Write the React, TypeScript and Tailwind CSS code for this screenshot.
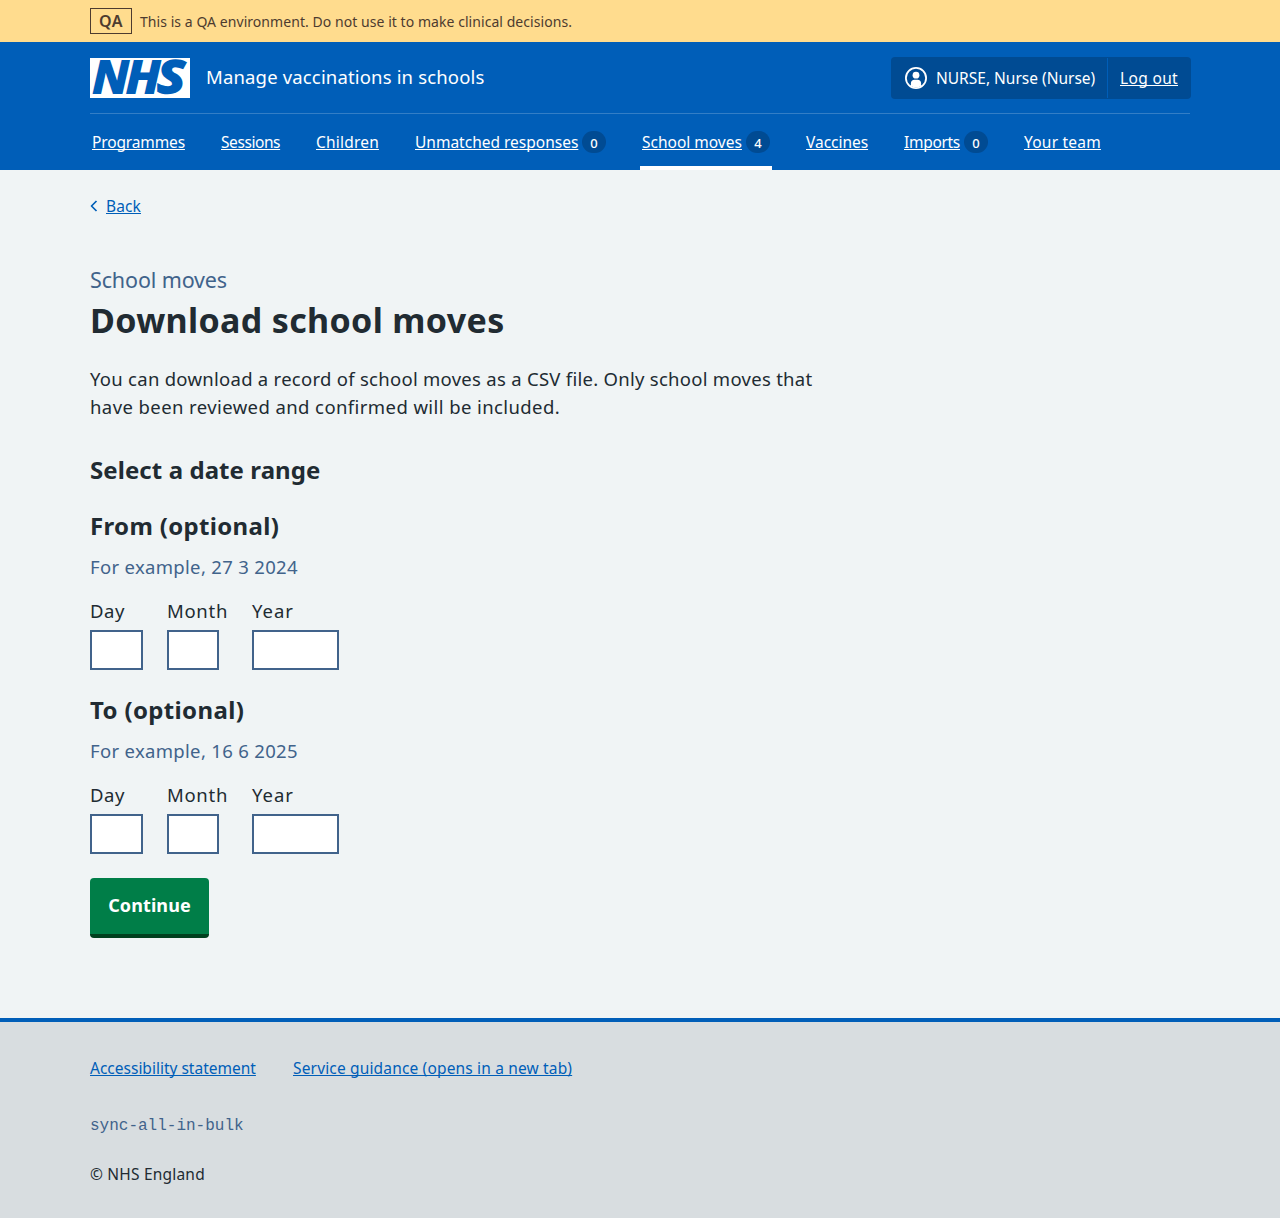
import type { ReactNode } from "react";

const link = "underline decoration-1 underline-offset-[1px] [text-decoration-skip-ink:none]";

function Logo() {
  return (
    <svg viewBox="0 0 100 40" className="h-10 w-[100px] shrink-0" role="img" aria-label="NHS">
      <rect width="100" height="40" fill="#fff" />
      <g fill="#005eb8" stroke="#005eb8" strokeWidth="1.8" fontFamily="'Open Sans', sans-serif" fontWeight="700" fontStyle="italic" fontSize="44">
        <text x="2.500" y="35.300" textLength="36" lengthAdjust="spacingAndGlyphs">N</text>
        <text x="36" y="35.300" textLength="34" lengthAdjust="spacingAndGlyphs">H</text>
        <text x="67.500" y="35.300" textLength="27" lengthAdjust="spacingAndGlyphs" strokeWidth="2.400">S</text>
      </g>
    </svg>
  );
}

function NavItem({ label, tracking, width, count, current }: { label: string; tracking: string; width: string; count?: number; current?: boolean }) {
  return (
    <li className={`flex h-14 items-center gap-1 border-b-4 px-0.5 pt-1 ${current ? "border-white" : "border-transparent"}`}>
      <a href="#" className={`${link} ${tracking} ${width}`}>{label}</a>
      {count !== undefined && (
        <span className="flex h-[22px] w-6 items-center justify-center rounded-full bg-[#004b93] pt-0.5 text-[13px] font-medium leading-none">{count}</span>
      )}
    </li>
  );
}

function Field({ label, tracking, col, input }: { label: string; tracking: string; col: string; input: string }) {
  return (
    <label className={`flex flex-col ${col}`}>
      <span className={`mb-[5px] h-7 text-[18.5px] leading-7 ${tracking}`}>{label}</span>
      <input className={`h-10 border-2 border-[#41638b] bg-white ${input}`} />
    </label>
  );
}

function DateGroup({ title, tracking, hint }: { title: ReactNode; tracking: string; hint: string }) {
  return (
    <fieldset className="mb-6 h-[160px]">
      <h2 className={`h-8 text-2xl font-bold leading-8 ${tracking}`}>{title}</h2>
      <div className="mt-[11px] h-7 text-[18.5px] leading-7 tracking-[0.32px] text-[#41638b]">{hint}</div>
      <div className="mt-4 flex">
        <Field label="Day" tracking="tracking-[0.55px]" col="w-[77px]" input="w-[53px]" />
        <Field label="Month" tracking="tracking-[0.7px]" col="w-[85px]" input="w-[52px]" />
        <Field label="Year" tracking="tracking-[0.95px]" col="w-[87px]" input="w-[87px]" />
      </div>
    </fieldset>
  );
}

export default function App() {
  return (
    <div className="flex min-h-[1218px] flex-col whitespace-nowrap bg-[#f0f4f5] font-['Noto_Sans',sans-serif] text-[15.5px] leading-6 text-[#212b32]">
      <div className="h-[42px] bg-[#ffdc8e] text-[#4d3b2f]">
        <div className="mx-auto flex h-full w-[1100px] items-center gap-2">
          <strong className="flex h-[26px] w-[42px] items-center justify-center border border-[#4d3b2f] text-base font-semibold tracking-[0.4px]">QA</strong>
          <span className="pt-0.5 text-sm tracking-[0.055px]">This is a QA environment. Do not use it to make clinical decisions.</span>
        </div>
      </div>

      <header className="h-32 bg-[#005eb8] text-white">
        <div className="mx-auto w-[1100px]">
          <div className="flex h-[72px] items-center border-b border-[#337ec6]">
            <Logo />
            <span className="ml-4 pb-px text-[18.5px] tracking-[0.16px]">Manage vaccinations in schools</span>
            <div className="-mr-px ml-auto flex h-[42px] w-[300px] rounded bg-[#004b93] py-px">
              <div className="flex w-[217px] items-center border-r border-[#005eb8] pl-[14px]">
                <svg viewBox="0 0 22 22" className="mr-[9px] h-[22px] w-[22px]">
                  <circle cx="11" cy="11" r="10.1" fill="none" stroke="#fff" strokeWidth="1.8" />
                  <circle cx="11" cy="8.2" r="3.4" fill="#fff" />
                  <path d="M5.900 19v-2.700c0-2.300 1.500-3.600 3.500-3.600h3.200c2 0 3.500 1.300 3.500 3.600V19a10 10 0 0 1-10.200 0z" fill="#fff" />
                </svg>
                <span>NURSE, Nurse (Nurse)</span>
              </div>
              <div className="flex items-center pl-3">
                <a href="#" className={`${link} tracking-[0.34px]`}>Log out</a>
              </div>
            </div>
          </div>
          <ul className="flex gap-8">
            <NavItem label="Programmes" tracking="tracking-[-0.14px]" width="w-[93px]" />
            <NavItem label="Sessions" tracking="tracking-[-0.42px]" width="w-[59px]" />
            <NavItem label="Children" tracking="tracking-[0.2px]" width="w-[63px]" />
            <NavItem label="Unmatched responses" tracking="tracking-normal" width="w-[163px]" count={0} />
            <NavItem label="School moves" tracking="tracking-normal" width="w-[100px]" count={4} current />
            <NavItem label="Vaccines" tracking="tracking-[-0.03px]" width="w-[62px]" />
            <NavItem label="Imports" tracking="tracking-[-0.3px]" width="w-[56px]" count={0} />
            <NavItem label="Your team" tracking="tracking-[0.23px]" width="w-[77px]" />
          </ul>
        </div>
      </header>

      <div className="mx-auto w-[1100px] flex-1">
        <div className="mt-6 flex h-6 items-center text-[#005eb8]">
          <svg viewBox="0 0 8 12" className="mr-2 h-3 w-2" fill="none" stroke="#005eb8" strokeWidth="1.7" strokeLinejoin="round">
            <path d="M6.500 1 1.500 6l5 5" />
          </svg>
          <a href="#" className={`${link} tracking-[0.12px]`}>Back</a>
        </div>
        <main className="pt-[46px]">
          <h1>
            <span className="block h-8 text-[21.5px] leading-8 tracking-[-0.13px] text-[#41638b]">School moves</span>
            <span className="block h-12 text-[34px] font-bold leading-[48px] tracking-[0.34px]">Download school moves</span>
          </h1>
          <p className="mt-[21px] text-[18.5px] leading-7">
            <span className="block tracking-[0.275px]">You can download a record of school moves as a CSV file. Only school moves that</span>
            <span className="block tracking-[0.41px]">have been reviewed and confirmed will be included.</span>
          </p>
          <h2 className="mb-6 mt-[33px] h-8 text-2xl font-bold leading-8 tracking-[0.08px]">Select a date range</h2>
          <DateGroup title="From (optional)" tracking="tracking-[0.33px]" hint="For example, 27 3 2024" />
          <DateGroup title="To (optional)" tracking="tracking-[0.35px]" hint="For example, 16 6 2025" />
          <button className="h-[60px] w-[119px] rounded border-b-4 border-[#00401e] bg-[#007e48] pb-0.5 text-lg font-bold tracking-[0.1px] text-white">Continue</button>
        </main>
      </div>

      <footer className="h-[200px] border-t-4 border-[#005eb8] bg-[#d8dde0]">
        <div className="mx-auto w-[1100px] pt-[34px]">
          <div className="flex h-6 items-center gap-[37px] text-[#005eb8]">
            <a href="#" className={`${link} w-[166px]`}>Accessibility statement</a>
            <a href="#" className={`${link} tracking-[0.16px]`}>Service guidance (opens in a new tab)</a>
          </div>
          <div className="mt-[34px] h-6 font-['Liberation_Mono',monospace] text-base leading-6 text-[#41638b]">sync-all-in-bulk</div>
          <p className="mt-6 leading-6 tracking-[0.2px]">© NHS England</p>
        </div>
      </footer>
    </div>
  );
}
